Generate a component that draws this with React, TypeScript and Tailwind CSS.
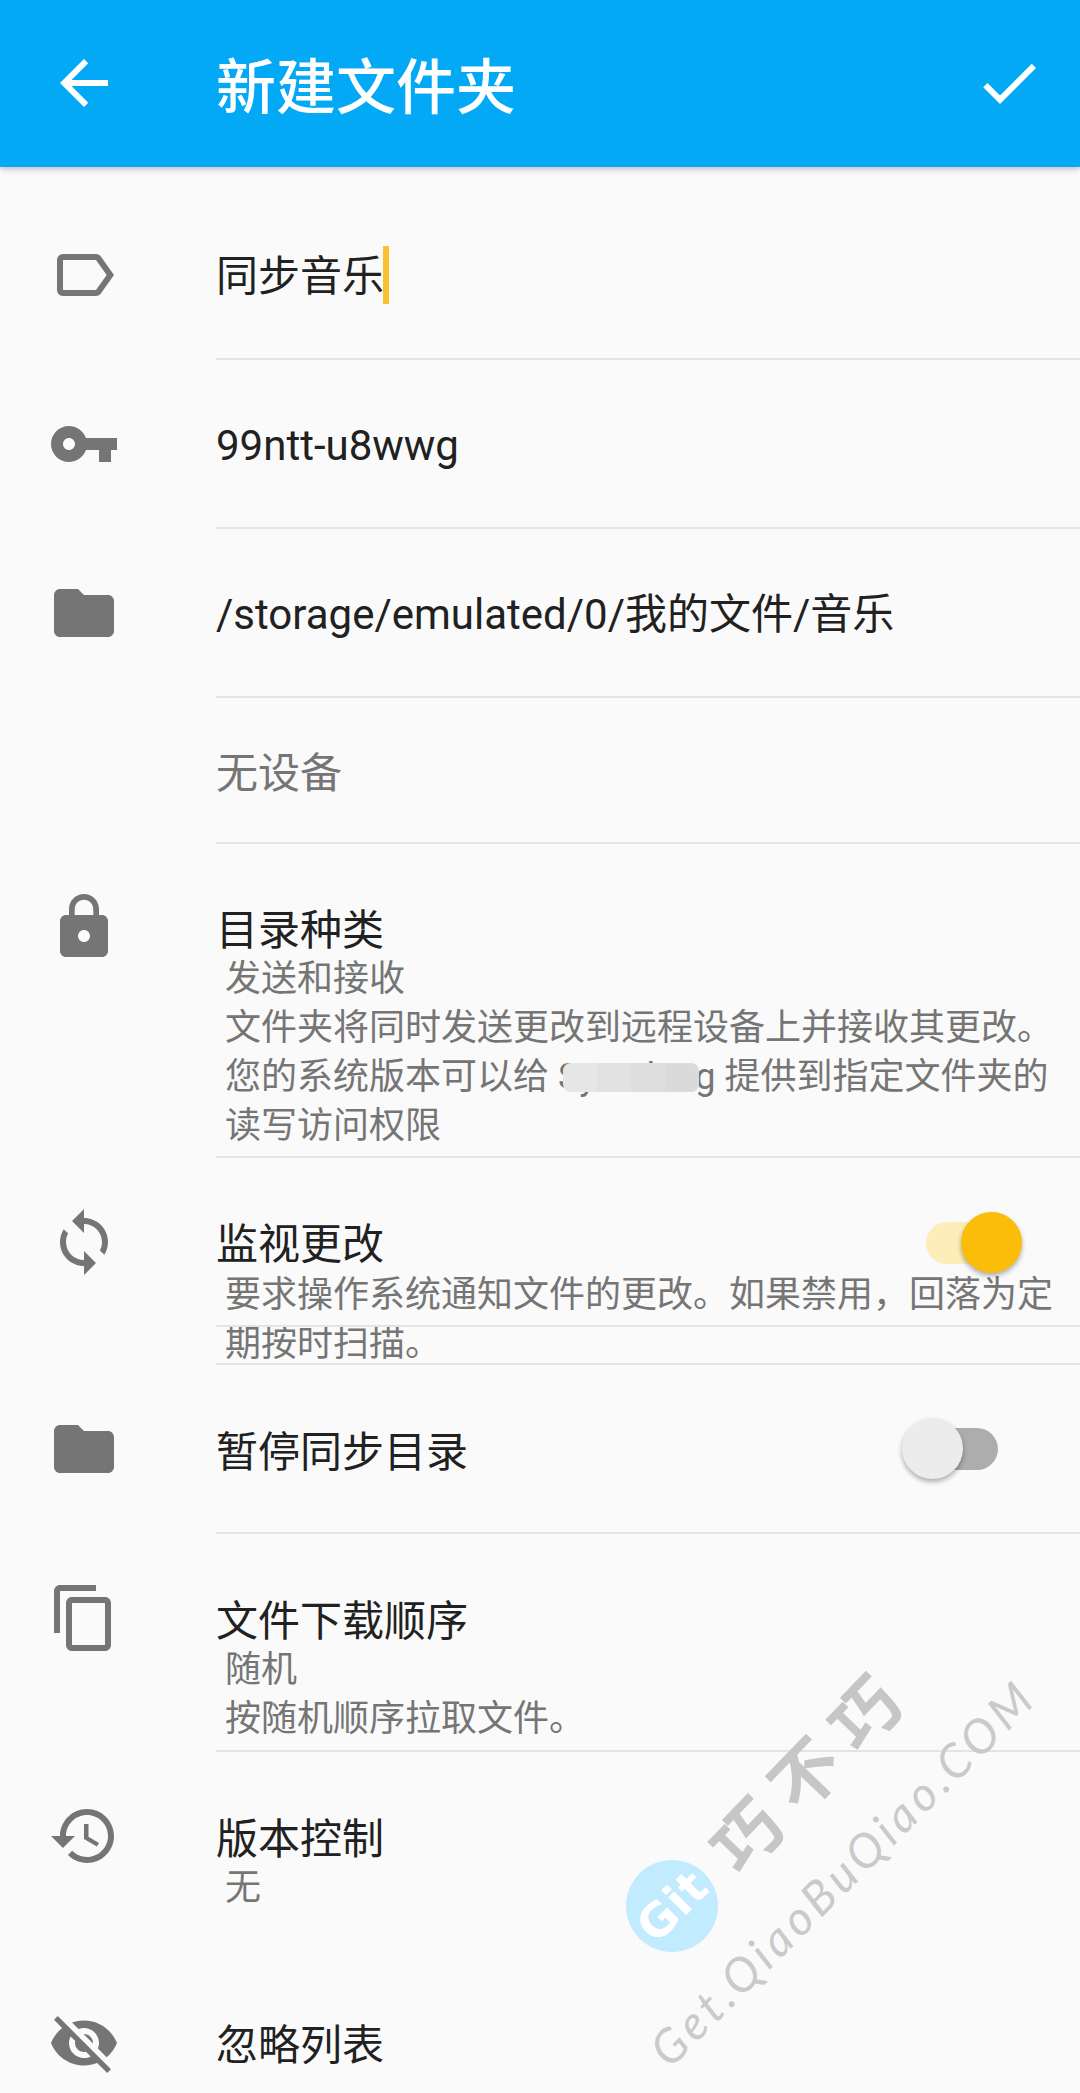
import type { ReactNode } from 'react';

const ICONS = {
  back: 'M20 11H7.83l5.59-5.59L12 4l-8 8 8 8 1.41-1.41L7.83 13H20v-2z',
  check: 'M9 16.17L4.83 12l-1.41 1.41L9 19 21 7l-1.41-1.41z',
  label: 'M17.63 5.84C17.27 5.33 16.67 5 16 5L5 5.01C3.9 5.01 3 5.9 3 7v10c0 1.1.9 1.99 2 1.99L16 19c.67 0 1.27-.33 1.63-.84L22 12l-4.37-6.16zM16 17H5V7h11l3.55 5L16 17z',
  key: 'M12.65 10C11.83 7.67 9.61 6 7 6c-3.31 0-6 2.69-6 6s2.69 6 6 6c2.61 0 4.83-1.67 5.65-4H17v4h4v-4h2v-4H12.65zM7 14c-1.1 0-2-.9-2-2s.9-2 2-2 2 .9 2 2-.9 2-2 2z',
  folder: 'M10 4H4c-1.1 0-1.99.9-1.99 2L2 18c0 1.1.9 2 2 2h16c1.1 0 2-.9 2-2V8c0-1.1-.9-2-2-2h-8l-2-2z',
  lock: 'M18 8h-1V6c0-2.76-2.24-5-5-5S7 3.24 7 6v2H6c-1.1 0-2 .9-2 2v10c0 1.1.9 2 2 2h12c1.1 0 2-.9 2-2V10c0-1.1-.9-2-2-2zm-6 9c-1.1 0-2-.9-2-2s.9-2 2-2 2 .9 2 2-.9 2-2 2zm3.1-9H8.9V6c0-1.71 1.39-3.1 3.1-3.1 1.71 0 3.1 1.39 3.1 3.1v2z',
  sync: 'M12 4V1L8 5l4 4V6c3.31 0 6 2.69 6 6 0 1.01-.25 1.97-.7 2.8l1.46 1.46C19.54 15.03 20 13.57 20 12c0-4.42-3.58-8-8-8zm0 14c-3.31 0-6-2.69-6-6 0-1.01.25-1.97.7-2.8L5.24 7.74C4.46 8.97 4 10.43 4 12c0 4.42 3.58 8 8 8v3l4-4-4-4v3z',
  copy: 'M16 1H4c-1.1 0-2 .9-2 2v14h2V3h12V1zm3 4H8c-1.1 0-2 .9-2 2v14c0 1.1.9 2 2 2h11c1.1 0 2-.9 2-2V7c0-1.1-.9-2-2-2zm0 16H8V7h11v14z',
  history: 'M13 3c-4.97 0-9 4.03-9 9H1l3.89 3.89.07.14L9 12H6c0-3.87 3.13-7 7-7s7 3.13 7 7-3.13 7-7 7c-1.93 0-3.68-.79-4.94-2.06l-1.42 1.42C8.27 19.99 10.51 21 13 21c4.97 0 9-4.03 9-9s-4.03-9-9-9zm-1 5v5l4.28 2.54.72-1.21-3.5-2.08V8H12z',
  eyeOff: 'M12 7c2.76 0 5 2.24 5 5 0 .65-.13 1.26-.36 1.83l2.92 2.92c1.51-1.26 2.7-2.89 3.43-4.75-1.73-4.39-6-7.5-11-7.5-1.4 0-2.74.25-3.98.7l2.16 2.16C10.74 7.13 11.35 7 12 7zM2 4.27l2.28 2.28.46.46C3.08 8.3 1.78 10.02 1 12c1.73 4.39 6 7.5 11 7.5 1.55 0 3.03-.3 4.38-.84l.42.42L19.73 22 21 20.73 3.27 3 2 4.27zM7.53 9.8l1.55 1.55c-.05.21-.08.43-.08.65 0 1.66 1.34 3 3 3 .22 0 .44-.03.65-.08l1.55 1.55c-.67.33-1.41.53-2.2.53-2.76 0-5-2.24-5-5 0-.79.2-1.53.53-2.2zm4.31-.78l3.15 3.15.02-.16c0-1.66-1.34-3-3-3l-.17.01z',
};

function Icon({ d, className = '' }: { d: string; className?: string }) {
  return (
    <svg viewBox="0 0 24 24" className={`w-[72px] h-[72px] shrink-0 ${className}`} fill="currentColor">
      <path d={d} />
    </svg>
  );
}

function Row({
  icon,
  iconClass,
  className,
  children,
  noLine,
}: {
  icon?: string;
  iconClass?: string;
  className: string;
  children: ReactNode;
  noLine?: boolean;
}) {
  return (
    <div className={`flex ${className}`}>
      <div className="w-[216px] shrink-0 pl-12 text-[#757575]">
        {icon && <Icon d={icon} className={iconClass} />}
      </div>
      <div className={`relative flex-1 min-w-0 ${noLine ? '' : 'border-b-2 border-[#e4e4e4]'}`}>{children}</div>
    </div>
  );
}

function Title({ children, className = '' }: { children: ReactNode; className?: string }) {
  return <div className={`h-12 leading-[48px] text-[42px] text-[#212121] whitespace-nowrap ${className}`}>{children}</div>;
}

function Sub({ children }: { children: ReactNode }) {
  return <div className="h-[49px] leading-[49px] text-[36px] text-[#757575] pl-[9px] whitespace-nowrap">{children}</div>;
}

function Switch({ on }: { on: boolean }) {
  return (
    <div className={`absolute right-[82px] w-[72px] h-[42px] rounded-full ${on ? 'top-[64px] bg-[#fdedb9]' : 'top-[63px] bg-[#adadad]'}`}>
      <div
        className={`absolute -top-[10px] w-[61px] h-[61px] rounded-full shadow-[0_3px_5px_rgba(0,0,0,0.3)] ${
          on ? '-right-[24px] bg-[#fbbc0a]' : '-left-[24px] bg-[#ececec]'
        }`}
      />
    </div>
  );
}

function Watermark() {
  return (
    <div className="absolute inset-0 overflow-hidden pointer-events-none">
      <div className="absolute left-[626px] top-[1860px] w-[92px] h-[92px] rounded-full bg-[#c2ebff] flex items-center justify-center">
        <span className="-rotate-45 text-white font-bold text-[46px] leading-none tracking-[1px] font-['DejaVu_Sans',sans-serif]">Git</span>
      </div>
      <div className="absolute left-[663px] top-[1720px] w-[300px] h-[100px] -rotate-[46deg] flex items-center justify-center text-[68px] font-bold leading-none tracking-[17px] text-[#c6c6c6]">
        巧不巧
      </div>
      <div className="absolute left-[542px] top-[1842px] w-[600px] h-[60px] -rotate-[45deg] flex items-center justify-center text-[47px] italic leading-none tracking-[5px] text-[#cacaca] font-['Lato',sans-serif]">
        Get.QiaoBuQiao.COM
      </div>
    </div>
  );
}

export default function App() {
  return (
    <div className="relative w-[1080px] h-[2093px] overflow-hidden bg-[#fafafa] font-['Roboto','Noto_Sans_CJK_SC',sans-serif]">
      <header className="relative z-10 flex items-center h-[167px] pl-12 pr-[35px] bg-[#03a9f4] text-white shadow-[0_2px_6px_rgba(0,0,0,0.25)]">
        <Icon d={ICONS.back} className="-mt-[1px]" />
        <h1 className="ml-[96px] mt-[10px] flex-1 text-[60px] font-medium leading-none">新建文件夹</h1>
        <Icon d={ICONS.check} className="-mt-[2px]" />
      </header>

      <Row icon={ICONS.label} iconClass="mt-[72px]" className="h-[193px]">
        <Title className="mt-[86px] flex items-center">
          同步音乐
          <span className="inline-block -ml-[1px] mb-1 w-[6px] h-[58px] bg-[#fbc02d]" />
        </Title>
      </Row>
      <Row icon={ICONS.key} iconClass="mt-12" className="h-[169px]">
        <Title className="mt-[62px]">99ntt-u8wwg</Title>
      </Row>
      <Row icon={ICONS.folder} iconClass="mt-12" className="h-[169px]">
        <Title className="mt-[62px]">/storage/emulated/0/我的文件/音乐</Title>
      </Row>
      <Row className="h-[146px]">
        <Title className="mt-[52px] text-[#757575]!">无设备</Title>
      </Row>
      <Row icon={ICONS.lock} iconClass="mt-[47px]" className="h-[314px]">
        <Title className="mt-[63px]">目录种类</Title>
        <Sub>发送和接收</Sub>
        <Sub>文件夹将同时发送更改到远程设备上并接收其更改。</Sub>
        <Sub>
          您的系统版本可以给{' '}
          <span className="relative">
            Syncthing
            <span className="absolute left-[5px] right-[17px] top-[7px] h-[29px] flex overflow-hidden rounded-lg">
              <span className="flex-1 bg-[#e6e6e6]" />
              <span className="flex-1 bg-[#e2e2e2]" />
              <span className="flex-1 bg-[#dedede]" />
              <span className="flex-1 bg-[#dadada]" />
            </span>
          </span>{' '}
          提供到指定文件夹的
        </Sub>
        <Sub>读写访问权限</Sub>
      </Row>
      <Row icon={ICONS.sync} iconClass="mt-12" className="h-[207px]">
        <Title className="mt-[63px]">监视更改</Title>
        <div className="mt-[2px]">
          <Sub>要求操作系统通知文件的更改。如果禁用，回落为定</Sub>
          <Sub>期按时扫描。</Sub>
        </div>
        <div className="absolute left-0 right-0 top-[167px] h-[2px] bg-[#e4e4e4]" />
        <Switch on />
      </Row>
      <Row icon={ICONS.folder} iconClass="mt-12" className="h-[169px]">
        <Title className="mt-[64px]">暂停同步目录</Title>
        <Switch on={false} />
      </Row>
      <Row icon={ICONS.copy} iconClass="mt-12" className="h-[218px]">
        <Title className="mt-[64px]">文件下载顺序</Title>
        <Sub>随机</Sub>
        <Sub>按随机顺序拉取文件。</Sub>
      </Row>
      <Row icon={ICONS.history} iconClass="mt-12" className="h-[206px]" noLine>
        <Title className="mt-[64px]">版本控制</Title>
        <Sub>无</Sub>
      </Row>
      <Row icon={ICONS.eyeOff} iconClass="mt-[49px]" className="h-[135px]" noLine>
        <Title className="mt-[64px]">忽略列表</Title>
      </Row>

      <Watermark />
    </div>
  );
}
